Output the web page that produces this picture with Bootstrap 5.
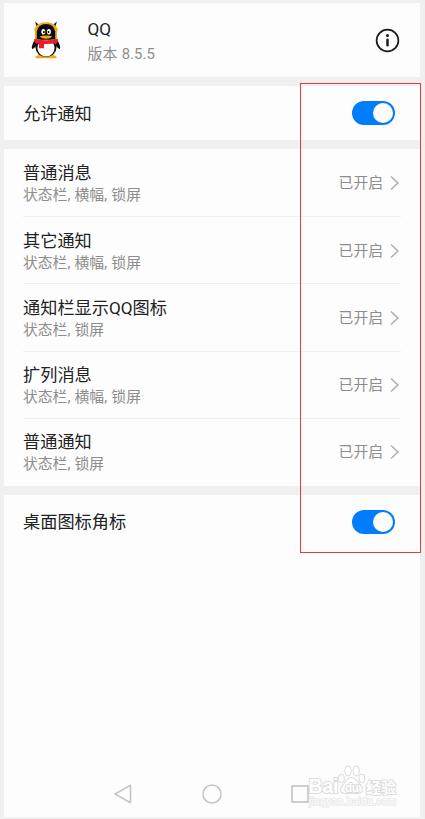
<!DOCTYPE html>
<html lang="zh-CN">
<head>
<meta charset="utf-8">
<meta name="viewport" content="width=device-width, initial-scale=1">
<title>QQ</title>
<link href="https://cdn.jsdelivr.net/npm/bootstrap@5.3.0/dist/css/bootstrap.min.css" rel="stylesheet">
<style>
  body { background: #f0f0f0; font-family: Roboto, "Noto Sans CJK SC", sans-serif; color: #222; height: 819px; overflow: hidden; }
  .phone { width: 416px; margin-left: 4px; padding-top: 3px; height: 817px; }
  .panel { background: #fdfdfd; padding: 0 19px; }
  .head-panel { height: 74px; padding-left: 27px; padding-right: 20px; }
  .switch-panel { height: 54px; margin-top: 9px; padding-right: 25px; }
  .list-panel { height: 337px; margin-top: 9px; padding-top: 1px; }
  .label { font-size: 17.2px; line-height: 20px; }
  .allow { padding-top: 1px; }
  .note { font-size: 14.8px; line-height: 18px; color: #8d8d8d; margin-top: 3px; word-spacing: .6px; }
  .entry { flex: 1 1 0; border-bottom: 1.4px solid #eee; padding-top: 1.6px; }
  .entry:last-child { border-bottom-color: transparent; }
  .state { font-size: 14.8px; line-height: 18px; color: #8d8d8d; margin-right: 6px; }
  .entry > .state, .entry > svg { margin-top: -1px; }
  .app-text { margin-left: 26.5px; padding-top: 2px; }
  .app-text .label { margin-top: -1px; }
  .app-text .note { margin-top: 6px; letter-spacing: .1px; }
  .toggle { width: 43px; height: 24px; border-radius: 12px; background: #007dff; padding: 2px; }
  .knob { width: 20px; height: 20px; border-radius: 50%; background: #fdfdfd; }
  .nav-keys { height: 46px; padding: 0 92px 0 91px; }
  .frame { left: 300px; top: 83px; width: 121px; height: 470px; border: 1px solid #ee3a3a; }
  .brand { left: 300px; top: 760px; }
</style>
<script src="https://cdn.jsdelivr.net/npm/bootstrap@5.3.0/dist/js/bootstrap.bundle.min.js"></script>
</head>
<body class="position-relative">
<svg width="0" height="0" class="position-absolute"><defs>
  <symbol id="chev" viewBox="0 0 12 18"><path d="M2 2.500 8.900 9 2 15.500" fill="none" stroke="#adadad" stroke-width="1.500"/></symbol>
</defs></svg>
<main class="phone d-flex flex-column">
  <header class="panel head-panel d-flex align-items-center">
    <svg width="30" height="38" viewBox="0 0 30 38">
      <path d="M7 34.500q-3.500 1-2.500 2.800h21q1-1.800-2.500-2.800l-3-2H9z" fill="#f5a817"/>
      <path d="M5.500 17Q1 22 .8 27q.5 2.500 4.200-2L6 17zM24.500 17q4.500 5 4.700 10-.5 2.500-4.200-2L24 17z" fill="#0a0a0a"/>
      <ellipse cx="15" cy="26.500" rx="10.500" ry="9.600" fill="#0a0a0a"/>
      <ellipse cx="15" cy="27" rx="8.600" ry="8.600" fill="#fff"/>
      <path d="M6 5.500 5.200 2.200 7.300 4M24 5.500l.8-3.300L22.700 4" fill="#222" stroke="#222" stroke-width="1.200"/>
      <path d="M4 18.500V11q-1.500-2 0-4.200Q7 1.300 15 1.300t11 5.500q1.500 2.200 0 4.200v7.500z" fill="#f5a817"/>
      <path d="M5.800 18.500V10.500Q7 2.900 15 2.900t9.200 7.600v8z" fill="#0a0a0a"/>
      <ellipse cx="12.300" cy="10.800" rx="2" ry="2.800" fill="#fff"/><ellipse cx="17.900" cy="10.800" rx="2" ry="2.800" fill="#fff"/>
      <circle cx="12.900" cy="11" r="1"/><circle cx="17.500" cy="11" r="1"/>
      <path d="M8.500 15.500q6.500-2.200 13 0-2 2.300-6.500 2.300t-6.500-2.300z" fill="#f5a817"/>
      <path d="M3 18q12 2.500 24 0l-.6 3.900q-6 1.300-13.400 1.100v4.300H8v-4.800l-4.200-.8z" fill="#ee1c2b"/>
    </svg>
    <div class="app-text flex-grow-1">
      <div class="label">QQ</div>
      <div class="note">版本 8.5.5</div>
    </div>
    <svg width="25" height="25" viewBox="0 0 25 25"><circle cx="12.500" cy="12.500" r="10.900" fill="none" stroke="#1b1b1b" stroke-width="1.700"/><circle cx="12.500" cy="7.500" r="1.500" fill="#1b1b1b"/><path d="M12.500 11.700v5.600" stroke="#1b1b1b" stroke-width="2.500" stroke-linecap="round"/></svg>
  </header>
  <section class="panel switch-panel d-flex align-items-center justify-content-between">
    <div class="label allow">允许通知</div>
    <div class="toggle d-flex justify-content-end align-items-center" role="switch" aria-checked="true"><span class="knob"></span></div>
  </section>
  <section class="panel list-panel d-flex flex-column">
    <div class="entry d-flex align-items-center"><div class="flex-grow-1"><div class="label">普通消息</div><div class="note">状态栏, 横幅, 锁屏</div></div><span class="state">已开启</span><svg width="12" height="18"><use href="#chev"/></svg></div>
    <div class="entry d-flex align-items-center"><div class="flex-grow-1"><div class="label">其它通知</div><div class="note">状态栏, 横幅, 锁屏</div></div><span class="state">已开启</span><svg width="12" height="18"><use href="#chev"/></svg></div>
    <div class="entry d-flex align-items-center"><div class="flex-grow-1"><div class="label">通知栏显示QQ图标</div><div class="note">状态栏, 锁屏</div></div><span class="state">已开启</span><svg width="12" height="18"><use href="#chev"/></svg></div>
    <div class="entry d-flex align-items-center"><div class="flex-grow-1"><div class="label">扩列消息</div><div class="note">状态栏, 横幅, 锁屏</div></div><span class="state">已开启</span><svg width="12" height="18"><use href="#chev"/></svg></div>
    <div class="entry d-flex align-items-center"><div class="flex-grow-1"><div class="label">普通通知</div><div class="note">状态栏, 锁屏</div></div><span class="state">已开启</span><svg width="12" height="18"><use href="#chev"/></svg></div>
  </section>
  <section class="panel switch-panel d-flex align-items-center justify-content-between">
    <div class="label">桌面图标角标</div>
    <div class="toggle d-flex justify-content-end align-items-center" role="switch" aria-checked="true"><span class="knob"></span></div>
  </section>
  <div class="panel flex-grow-1 d-flex flex-column justify-content-end p-0">
    <nav class="nav-keys d-flex justify-content-between align-items-center">
      <svg width="56" height="22" viewBox="0 0 56 22"><path d="M35.500 2.200v17.600L20 11z" fill="none" stroke="#c6c6c6" stroke-width="1.600" stroke-linejoin="round"/></svg>
      <svg width="22" height="22" viewBox="0 0 22 22"><circle cx="11" cy="11" r="9" fill="none" stroke="#c6c6c6" stroke-width="1.600"/></svg>
      <svg width="56" height="22" viewBox="0 0 56 22"><rect x="20" y="3" width="16" height="16" fill="none" stroke="#c6c6c6" stroke-width="1.700"/></svg>
    </nav>
  </div>
</main>
<div class="frame position-absolute"></div>
<svg class="brand position-absolute" width="120" height="56" viewBox="0 0 120 56">
  <g fill="#fff" stroke="#dedede" stroke-width="1.100">
    <ellipse cx="41.500" cy="18.500" rx="2.900" ry="4"/><ellipse cx="48" cy="11" rx="3.100" ry="4.900"/><ellipse cx="56.300" cy="11" rx="3.100" ry="4.900"/><ellipse cx="61.800" cy="18.500" rx="2.900" ry="4.200"/>
    <path d="M51.500 17.500c-4.500 0-5 4-8 6.500-4 3.500-4.500 9 1.500 9.500h13c6-.5 5.500-6.500 1.500-9.500-3-2.300-3.500-6.500-8-6.500z"/>
  </g>
  <g fill="#fff" stroke="#dcdcdc" stroke-width="2" stroke-linejoin="round" paint-order="stroke" font-family="Liberation Sans, Noto Sans CJK SC, sans-serif" font-weight="700">
    <text x="8.500" y="33" font-size="19.500" textLength="30">Bai</text>
    <text x="45" y="31.500" font-size="12" textLength="14">du</text>
    <text x="66" y="33" font-size="15" textLength="30" font-family="Noto Sans CJK SC, sans-serif">经验</text>
    <text x="9" y="45" font-size="10" font-weight="400" stroke="#e6e6e6" stroke-width="1.400" textLength="87">jingyan.baidu.com</text>
  </g>
</svg>
</body>
</html>
